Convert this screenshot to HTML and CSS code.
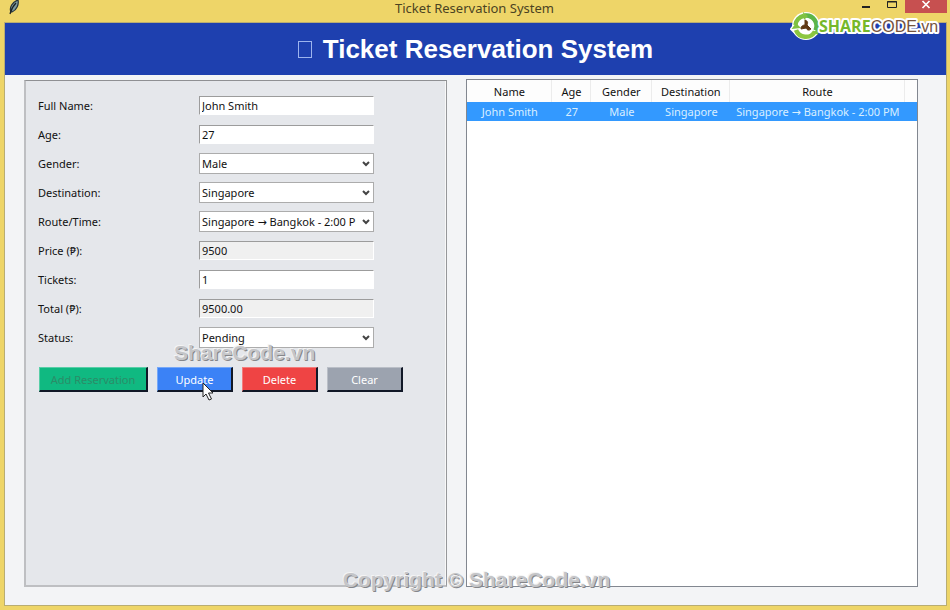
FILE: index.html
```html
<!DOCTYPE html>
<html lang="en">
<head>
    <meta charset="UTF-8">
    <meta name="viewport" content="width=device-width, initial-scale=1.0">
    <title>Ticket Reservation System</title>
    <link rel="stylesheet" href="styles.css">
</head>
<body>

<div class="window">
    <!-- Title bar -->
    <div class="titlebar">
        <svg class="feather" width="12" height="16" viewBox="0 0 12 16">
            <path d="M3 12C1 8 4 2 10 0C11 4 9 10 4 12Z" fill="#7d9a9c" stroke="#26343a" stroke-width="1.2"/>
            <path d="M2 14C3 10 5 6 8 3" fill="none" stroke="#1c2326" stroke-width="1.2"/>
        </svg>
        <span class="caption">Ticket Reservation System</span>
        <div class="window-buttons">
            <button class="win-btn" aria-label="Minimize"><svg width="10" height="14" viewBox="0 0 10 14"><path d="M1 6h8v2H1z" fill="#222"/></svg></button>
            <button class="win-btn" aria-label="Maximize"><svg width="10" height="14" viewBox="0 0 10 14"><path d="M.5 1.500h9v6h-9zM0 2h10" fill="none" stroke="#222"/></svg></button>
            <button class="win-btn close" aria-label="Close"><svg width="10" height="14" viewBox="0 0 10 14"><path d="M1.500 1l7 7M8.500 1l-7 7" stroke="#fff" stroke-width="1.700"/></svg></button>
        </div>
    </div>

    <div class="client">
        <h1 class="header"><span class="glyph"></span>Ticket Reservation System</h1>

        <div class="content">
            <!-- Reservation form -->
            <form class="panel">
                <div class="fields">
                    <label for="name">Full Name:</label>
                    <input type="text" id="name" value="John Smith">
                    <label for="age">Age:</label>
                    <input type="text" id="age" value="27">
                    <label for="gender">Gender:</label>
                    <div class="combo">
                        <select id="gender"><option>Male</option><option>Female</option></select>
                        <svg width="8" height="6" viewBox="0 0 8 6"><path d="M1 1l3 3 3-3" fill="none" stroke="#444" stroke-width="2"/></svg>
                    </div>
                    <label for="destination">Destination:</label>
                    <div class="combo">
                        <select id="destination"><option>Singapore</option></select>
                        <svg width="8" height="6" viewBox="0 0 8 6"><path d="M1 1l3 3 3-3" fill="none" stroke="#444" stroke-width="2"/></svg>
                    </div>
                    <label for="route">Route/Time:</label>
                    <div class="combo">
                        <select id="route"><option>Singapore → Bangkok - 2:00 PM</option></select>
                        <svg width="8" height="6" viewBox="0 0 8 6"><path d="M1 1l3 3 3-3" fill="none" stroke="#444" stroke-width="2"/></svg>
                    </div>
                    <label for="price">Price (₱):</label>
                    <input type="text" id="price" value="9500" readonly>
                    <label for="tickets">Tickets:</label>
                    <input type="text" id="tickets" value="1">
                    <label for="total">Total (₱):</label>
                    <input type="text" id="total" value="9500.00" readonly>
                    <label for="status">Status:</label>
                    <div class="combo">
                        <select id="status"><option>Pending</option></select>
                        <svg width="8" height="6" viewBox="0 0 8 6"><path d="M1 1l3 3 3-3" fill="none" stroke="#444" stroke-width="2"/></svg>
                    </div>
                </div>
                <div class="actions">
                    <button type="button" class="btn add" disabled>Add Reservation</button>
                    <button type="button" class="btn update">Update</button>
                    <button type="button" class="btn delete">Delete</button>
                    <button type="button" class="btn clear">Clear</button>
                </div>
            </form>

            <!-- Reservation list -->
            <div class="tree">
                <table>
                    <colgroup>
                        <col class="c-name"><col class="c-age"><col class="c-gender"><col class="c-dest"><col class="c-route"><col>
                    </colgroup>
                    <thead>
                        <tr><th>Name</th><th>Age</th><th>Gender</th><th>Destination</th><th>Route</th><th></th></tr>
                    </thead>
                    <tbody>
                        <tr class="selected"><td>John Smith</td><td>27</td><td>Male</td><td>Singapore</td><td>Singapore → Bangkok - 2:00 PM</td><td></td></tr>
                    </tbody>
                </table>
            </div>
        </div>
    </div>

    <!-- Overlays -->
    <svg class="logo" width="152" height="34" viewBox="0 0 152 34">
        <circle cx="16" cy="17" r="14" fill="#fff"/>
        <path d="M1 20l6-8 6 5-3 5 4 6-6-1z" fill="#fff" stroke="#fff" stroke-width="2"/>
        <path d="M5.500 16A10.500 10.500 0 0 1 14 6.700" fill="none" stroke="#7fc241" stroke-width="4.500"/>
        <path d="M15 6.500A10.500 10.500 0 0 1 25.500 21.500" fill="none" stroke="#5cb548" stroke-width="4.500"/>
        <path d="M25 22.500A10.500 10.500 0 0 1 6 21" fill="none" stroke="#8cc63f" stroke-width="4.500"/>
        <path d="M1.500 20l4.500-6 5 5zM13 3l5 4-4 4zM29 20l-1 6-5-3z" fill="#7fc241"/>
        <path d="M15 11c3 1 3 3 2 5l4 4c-2 2-4 1-5-1l-5 1c0-3 2-4 4-4z" fill="#603813" stroke="#603813"/>
        <text class="logo-text" x="29" y="23"><tspan class="share">SHARE</tspan><tspan class="code">CODE.vn</tspan></text>
    </svg>
    <div class="watermark mid">ShareCode.vn</div>
    <div class="watermark bottom">Copyright © ShareCode.vn</div>
    <svg class="cursor" width="13" height="19" viewBox="0 0 13 19">
        <path d="M1 1v14l3-3 3 6 2.500-1-3-6H11z" fill="#fff" stroke="#222"/>
    </svg>
</div>

</body>
</html>
```

FILE: styles.css
```css
* {
    box-sizing: border-box;
}
body {
    margin: 0;
    font-family: "Noto Sans", "DejaVu Sans", sans-serif;
    font-size: 11px;
    color: #111;
}
.window {
    position: relative;
    display: flex;
    flex-direction: column;
    min-height: 100vh;
    padding: 0 3px 4px 4px;
    background-color: #eed568;
    overflow: hidden;
}
.titlebar {
    display: flex;
    justify-content: space-between;
    align-items: flex-start;
    height: 22px;
}
.feather {
    flex: none;
    margin-left: 4px;
}
.caption {
    flex: 1;
    padding-left: 76px;
    font-size: 13px;
    line-height: 17px;
    text-align: center;
    color: #4b4322;
}
.window-buttons {
    display: flex;
    height: 13px;
}
.win-btn {
    width: 26px;
    padding: 0;
    border: none;
    background: none;
    line-height: 0;
}
.win-btn.close {
    width: 42px;
    background-color: #c75050;
}
.client {
    display: flex;
    flex-direction: column;
    flex: 1;
    border: 1px solid #b9ad72;
    background-color: #f3f4f6;
}
.header {
    display: flex;
    justify-content: center;
    align-items: center;
    gap: 11px;
    height: 52px;
    margin: 0;
    background-color: #1e40af;
    color: #fff;
    font-family: "Liberation Sans", Arial, sans-serif;
    font-size: 26px;
    font-weight: bold;
}
.glyph {
    width: 14px;
    height: 17px;
    border: 1px solid #9db4ee;
}
.content {
    display: grid;
    grid-template-columns: 15fr 16fr;
    gap: 19px;
    flex: 1;
    padding: 4px 28px 18px 19px;
}
.panel {
    padding: 10px 12px;
    margin-top: 1px;
    border: 1px solid;
    border-color: #8f9093 #96979a #bebfc2 #bebfc2;
    border-width: 1px 1px 2px 2px;
    background-color: #e5e7eb;
    box-shadow: inset -1px 0 0 #f8f8f8;
}
.fields {
    display: grid;
    grid-template-columns: 161px 175px;
    grid-auto-rows: 29px;
    align-items: center;
}
input {
    width: 100%;
    height: 19px;
    padding: 0 2px;
    border: 1px solid;
    border-color: #9c9c9c #fff #fff #9c9c9c;
    background-color: #fff;
    font: inherit;
    color: #111;
}
input[readonly] {
    background-color: #f0f0f0;
}
.combo {
    position: relative;
}
.combo select {
    display: block;
    width: 100%;
    height: 21px;
    padding: 0 17px 0 2px;
    border: 1px solid #acacac;
    border-radius: 0;
    background-color: #fff;
    appearance: none;
    font: inherit;
    color: #111;
    text-overflow: clip;
}
.combo svg {
    position: absolute;
    top: 8px;
    right: 4px;
    pointer-events: none;
}
.actions {
    display: flex;
    gap: 9px;
    margin-top: 15px;
    padding-left: 1px;
}
.btn {
    width: 76px;
    height: 25px;
    padding: 0;
    border: 1px solid;
    border-color: rgba(255, 255, 255, 0.3) #111827 #111827 rgba(255, 255, 255, 0.3);
    border-width: 1px 2px 2px 1px;
    color: #fff;
    font: inherit;
}
.btn.add {
    width: 109px;
    background-color: #10b981;
    color: #2b8c68;
}
.btn.update {
    background-color: #3b82f6;
}
.btn.delete {
    background-color: #ef4444;
}
.btn.clear {
    background-color: #9ca3af;
}
.tree {
    border: 1px solid #828790;
    background-color: #fff;
}
table {
    width: 100%;
    table-layout: fixed;
    border-collapse: separate;
    border-spacing: 0;
}
.c-name {
    width: 85px;
}
.c-age {
    width: 39px;
}
.c-gender {
    width: 61px;
}
.c-dest {
    width: 78px;
}
.c-route {
    width: 175px;
}
th, td {
    padding: 0;
    font-weight: normal;
    text-align: center;
    white-space: nowrap;
}
th {
    height: 22px;
    border-right: 1px solid #ececec;
    background-color: #fdfdfd;
}
th:last-child {
    border-right: none;
}
.selected td {
    height: 19px;
    background-color: #3399ff;
    color: #d9efff;
}
.logo {
    position: absolute;
    top: 9px;
    right: 8px;
}
.logo-text {
    font-size: 16px;
    stroke: #fff;
    stroke-width: 4px;
    stroke-linejoin: round;
    paint-order: stroke;
}
.share {
    font-family: "Open Sans", sans-serif;
    font-weight: bold;
    fill: #76b82a;
}
.code {
    font-family: "Liberation Sans", Arial, sans-serif;
    fill: #76533c;
}
.watermark {
    position: absolute;
    font-family: "Liberation Sans", Arial, sans-serif;
    font-size: 21px;
    font-weight: bold;
    line-height: 24px;
    color: #c4c5c8;
    text-shadow: -1px -1px 0 #f4f4f4, 1px 1px 0 #85868a;
    white-space: nowrap;
    pointer-events: none;
}
.watermark.mid {
    top: 341px;
    left: 174px;
}
.watermark.bottom {
    right: 0;
    bottom: 18px;
    left: 3px;
    text-align: center;
}
.cursor {
    position: absolute;
    top: 382px;
    left: 202px;
}
```
